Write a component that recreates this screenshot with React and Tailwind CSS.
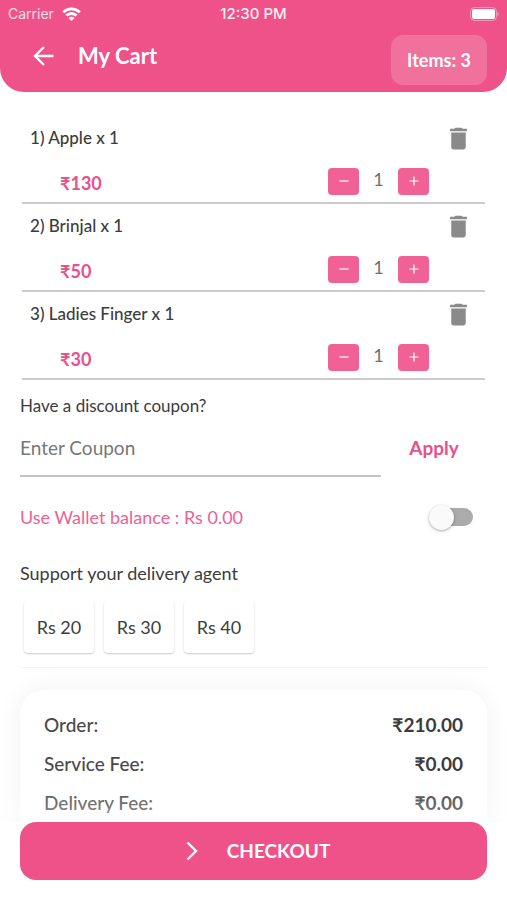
import React, { useState } from 'react';
import { MdDelete } from 'react-icons/md';

const initialItems = [
  { id: 1, name: 'Apple', price: 130, quantity: 1 },
  { id: 2, name: 'Brinjal', price: 50, quantity: 1 },
  { id: 3, name: 'Ladies Finger', price: 30, quantity: 1 },
];

const tips = [20, 30, 40];

const StatusBar = () => (
  <div className="grid grid-cols-3 items-center h-7 px-2 font-['Inter',sans-serif] text-sm">
    <div className="flex items-center gap-2 text-white/80">
      <span>Carrier</span>
      <svg width="19" height="14" viewBox="0 0 19 14" fill="none" stroke="white" strokeWidth="2.8" aria-hidden="true">
        <path d="M1.200 5.200a11.800 11.800 0 0 1 16.600 0" />
        <path d="M4.400 8.600a7.200 7.200 0 0 1 10.200 0" />
        <path d="M9.500 14 6.500 11a4.200 4.200 0 0 1 6 0z" fill="white" stroke="none" />
      </svg>
    </div>
    <span className="text-center text-[15px] font-medium whitespace-nowrap text-white/90">12:30 PM</span>
    <svg className="justify-self-end" width="29" height="15" viewBox="0 0 29 15" aria-hidden="true">
      <rect x="0.5" y="0.5" width="26" height="13" rx="4" fill="none" stroke="white" strokeOpacity="0.4" />
      <rect x="2" y="2" width="23" height="10" rx="2" fill="white" />
      <path d="M27.500 5v4.500c1.500-.8 1.500-3.700 0-4.500z" fill="white" fillOpacity="0.5" />
    </svg>
  </div>
);

const CartItem = ({ index, item, onChange, onRemove }) => (
  <li className="border-b-2 border-[#cbcbcb] h-22 pl-2 pr-3">
    <div className="flex items-center justify-between h-11">
      <p className="text-[17px] font-medium text-[#3c3c3c]">
        {index + 1}) {item.name} x {item.quantity}
      </p>
      <button onClick={() => onRemove(item.id)} aria-label={`Remove ${item.name}`} className="text-[#8a8a8a]">
        <MdDelete size={29} />
      </button>
    </div>
    <div className="flex items-center justify-between h-[42px] pl-[30px] pr-11">
      <p className="pt-1 text-lg font-bold text-[#e9508a]">₹{item.price}</p>
      <div className="flex items-center">
        <button
          onClick={() => onChange(item.id, -1)}
          aria-label={`Less ${item.name}`}
          className="flex items-center justify-center w-[31px] h-[27px] rounded bg-[#f06296] text-white"
        >
          <svg width="10" height="10" viewBox="0 0 10 10" stroke="currentColor" strokeWidth="1.2" aria-hidden="true">
            <path d="M0.500 5h9" />
          </svg>
        </button>
        <span className="w-[39px] pb-1 text-center text-lg text-[#707070]">{item.quantity}</span>
        <button
          onClick={() => onChange(item.id, 1)}
          aria-label={`More ${item.name}`}
          className="flex items-center justify-center w-[31px] h-[27px] rounded bg-[#f06296] text-white"
        >
          <svg width="10" height="10" viewBox="0 0 10 10" stroke="currentColor" strokeWidth="1.2" aria-hidden="true">
            <path d="M0.500 5h9M5 0.500v9" />
          </svg>
        </button>
      </div>
    </div>
  </li>
);

const App = () => {
  const [items, setItems] = useState(initialItems);
  const [coupon, setCoupon] = useState('');
  const [useWallet, setUseWallet] = useState(false);
  const [tip, setTip] = useState(0);

  const handleChange = (id, step) => {
    setItems(items.map((item) => (
      item.id === id ? { ...item, quantity: Math.max(1, item.quantity + step) } : item
    )));
  };

  const handleRemove = (id) => {
    setItems(items.filter((item) => item.id !== id));
  };

  const total = items.reduce((sum, item) => sum + item.price * item.quantity, 0);

  const fees = [
    { label: 'Order:', amount: total },
    { label: 'Service Fee:', amount: 0 },
    { label: 'Delivery Fee:', amount: 0 },
  ];

  return (
    <div className="flex flex-col h-screen overflow-hidden bg-white font-['Lato','Noto_Sans',sans-serif] text-[#3c3c3c]">
      <header className="shrink-0 rounded-b-3xl bg-[#ee5288] text-white">
        <StatusBar />
        <div className="flex items-center h-16 pl-8 pr-5">
          <button aria-label="Back" className="pb-2">
            <svg width="22" height="22" viewBox="0 0 22 22" fill="none" stroke="currentColor" strokeWidth="2.4" aria-hidden="true">
              <path d="M21.500 11H3.500M12 2l-9 9 9 9" />
            </svg>
          </button>
          <h1 className="flex-1 pl-6 pb-2 text-[22px] leading-7 font-bold">My Cart</h1>
          <div className="flex items-center justify-center w-24 h-[50px] rounded-xl bg-white/18 text-lg font-bold">
            Items: {items.length}
          </div>
        </div>
      </header>

      <main className="relative flex-1 min-h-0 overflow-hidden px-5 pt-6">
        <ul className="px-[2px]">
          {items.map((item, index) => (
            <CartItem
              key={item.id}
              index={index}
              item={item}
              onChange={handleChange}
              onRemove={handleRemove}
            />
          ))}
        </ul>

        <label htmlFor="coupon" className="block pt-3 text-[17px] leading-7">Have a discount coupon?</label>
        <div className="flex items-center">
          <input
            id="coupon"
            type="text"
            value={coupon}
            onChange={(e) => setCoupon(e.target.value)}
            placeholder="Enter Coupon"
            className="flex-1 min-w-0 h-[57px] border-b-2 border-[#c4c4c4] text-[19px] outline-none placeholder:text-[#777777]"
          />
          <button className="w-[106px] text-[19px] font-bold text-[#e9508a]">Apply</button>
        </div>

        <div className="flex items-center justify-between h-20 pr-3">
          <label htmlFor="wallet" className="text-lg text-[#ee5f93]">Use Wallet balance : Rs 0.00</label>
          <span className="relative flex items-center w-12 h-7">
            <input
              id="wallet"
              type="checkbox"
              role="switch"
              checked={useWallet}
              onChange={(e) => setUseWallet(e.target.checked)}
              className="peer appearance-none w-9 h-[18px] ml-2.5 rounded-full bg-[#ababab] checked:bg-[#f5a3c1]"
            />
            <span className="absolute left-0.5 size-[25px] rounded-full bg-[#fafafa] shadow-[0_1px_3px_rgba(0,0,0,0.35)] pointer-events-none peer-checked:left-6" />
          </span>
        </div>

        <h2 className="pt-0.5 text-lg">Support your delivery agent</h2>
        <div className="flex gap-[10px] overflow-hidden mt-3.5 px-1 pb-[14px] border-b border-[#f3f3f3]">
          {tips.map((amount) => (
            <button
              key={amount}
              onClick={() => setTip(amount)}
              aria-pressed={tip === amount}
              className="w-[70px] h-[52px] rounded bg-white text-lg shadow-[0_1px_2px_rgba(0,0,0,0.22)] aria-pressed:text-[#e9508a]"
            >
              Rs {amount}
            </button>
          ))}
        </div>

        <section className="mt-[22px] rounded-t-3xl bg-white px-6 pt-4 pb-12 shadow-[0_0_26px_rgba(0,0,0,0.06)]">
          <dl>
            {fees.map((fee) => (
              <div key={fee.label} className="flex items-center justify-between h-[39px] text-[19px]">
                <dt className="font-medium text-[#4a4a4a]">{fee.label}</dt>
                <dd className="font-bold">₹{fee.amount.toFixed(2)}</dd>
              </div>
            ))}
          </dl>
        </section>
        <div className="absolute inset-x-0 bottom-0 h-10 bg-linear-to-t from-white/40 to-white/0 pointer-events-none" />
      </main>

      <footer className="shrink-0 px-5 pb-5">
        <button className="flex items-center justify-center gap-7 w-full h-[58px] pl-2 rounded-2xl bg-[#ee5288] text-[19px] font-bold text-white">
          <svg width="14" height="20" viewBox="0 0 14 20" fill="none" stroke="currentColor" strokeWidth="2.4" aria-hidden="true">
            <path d="M2.500 1.500 11 10l-8.500 8.500" />
          </svg>
          CHECKOUT
        </button>
      </footer>
    </div>
  );
};

export default App;
